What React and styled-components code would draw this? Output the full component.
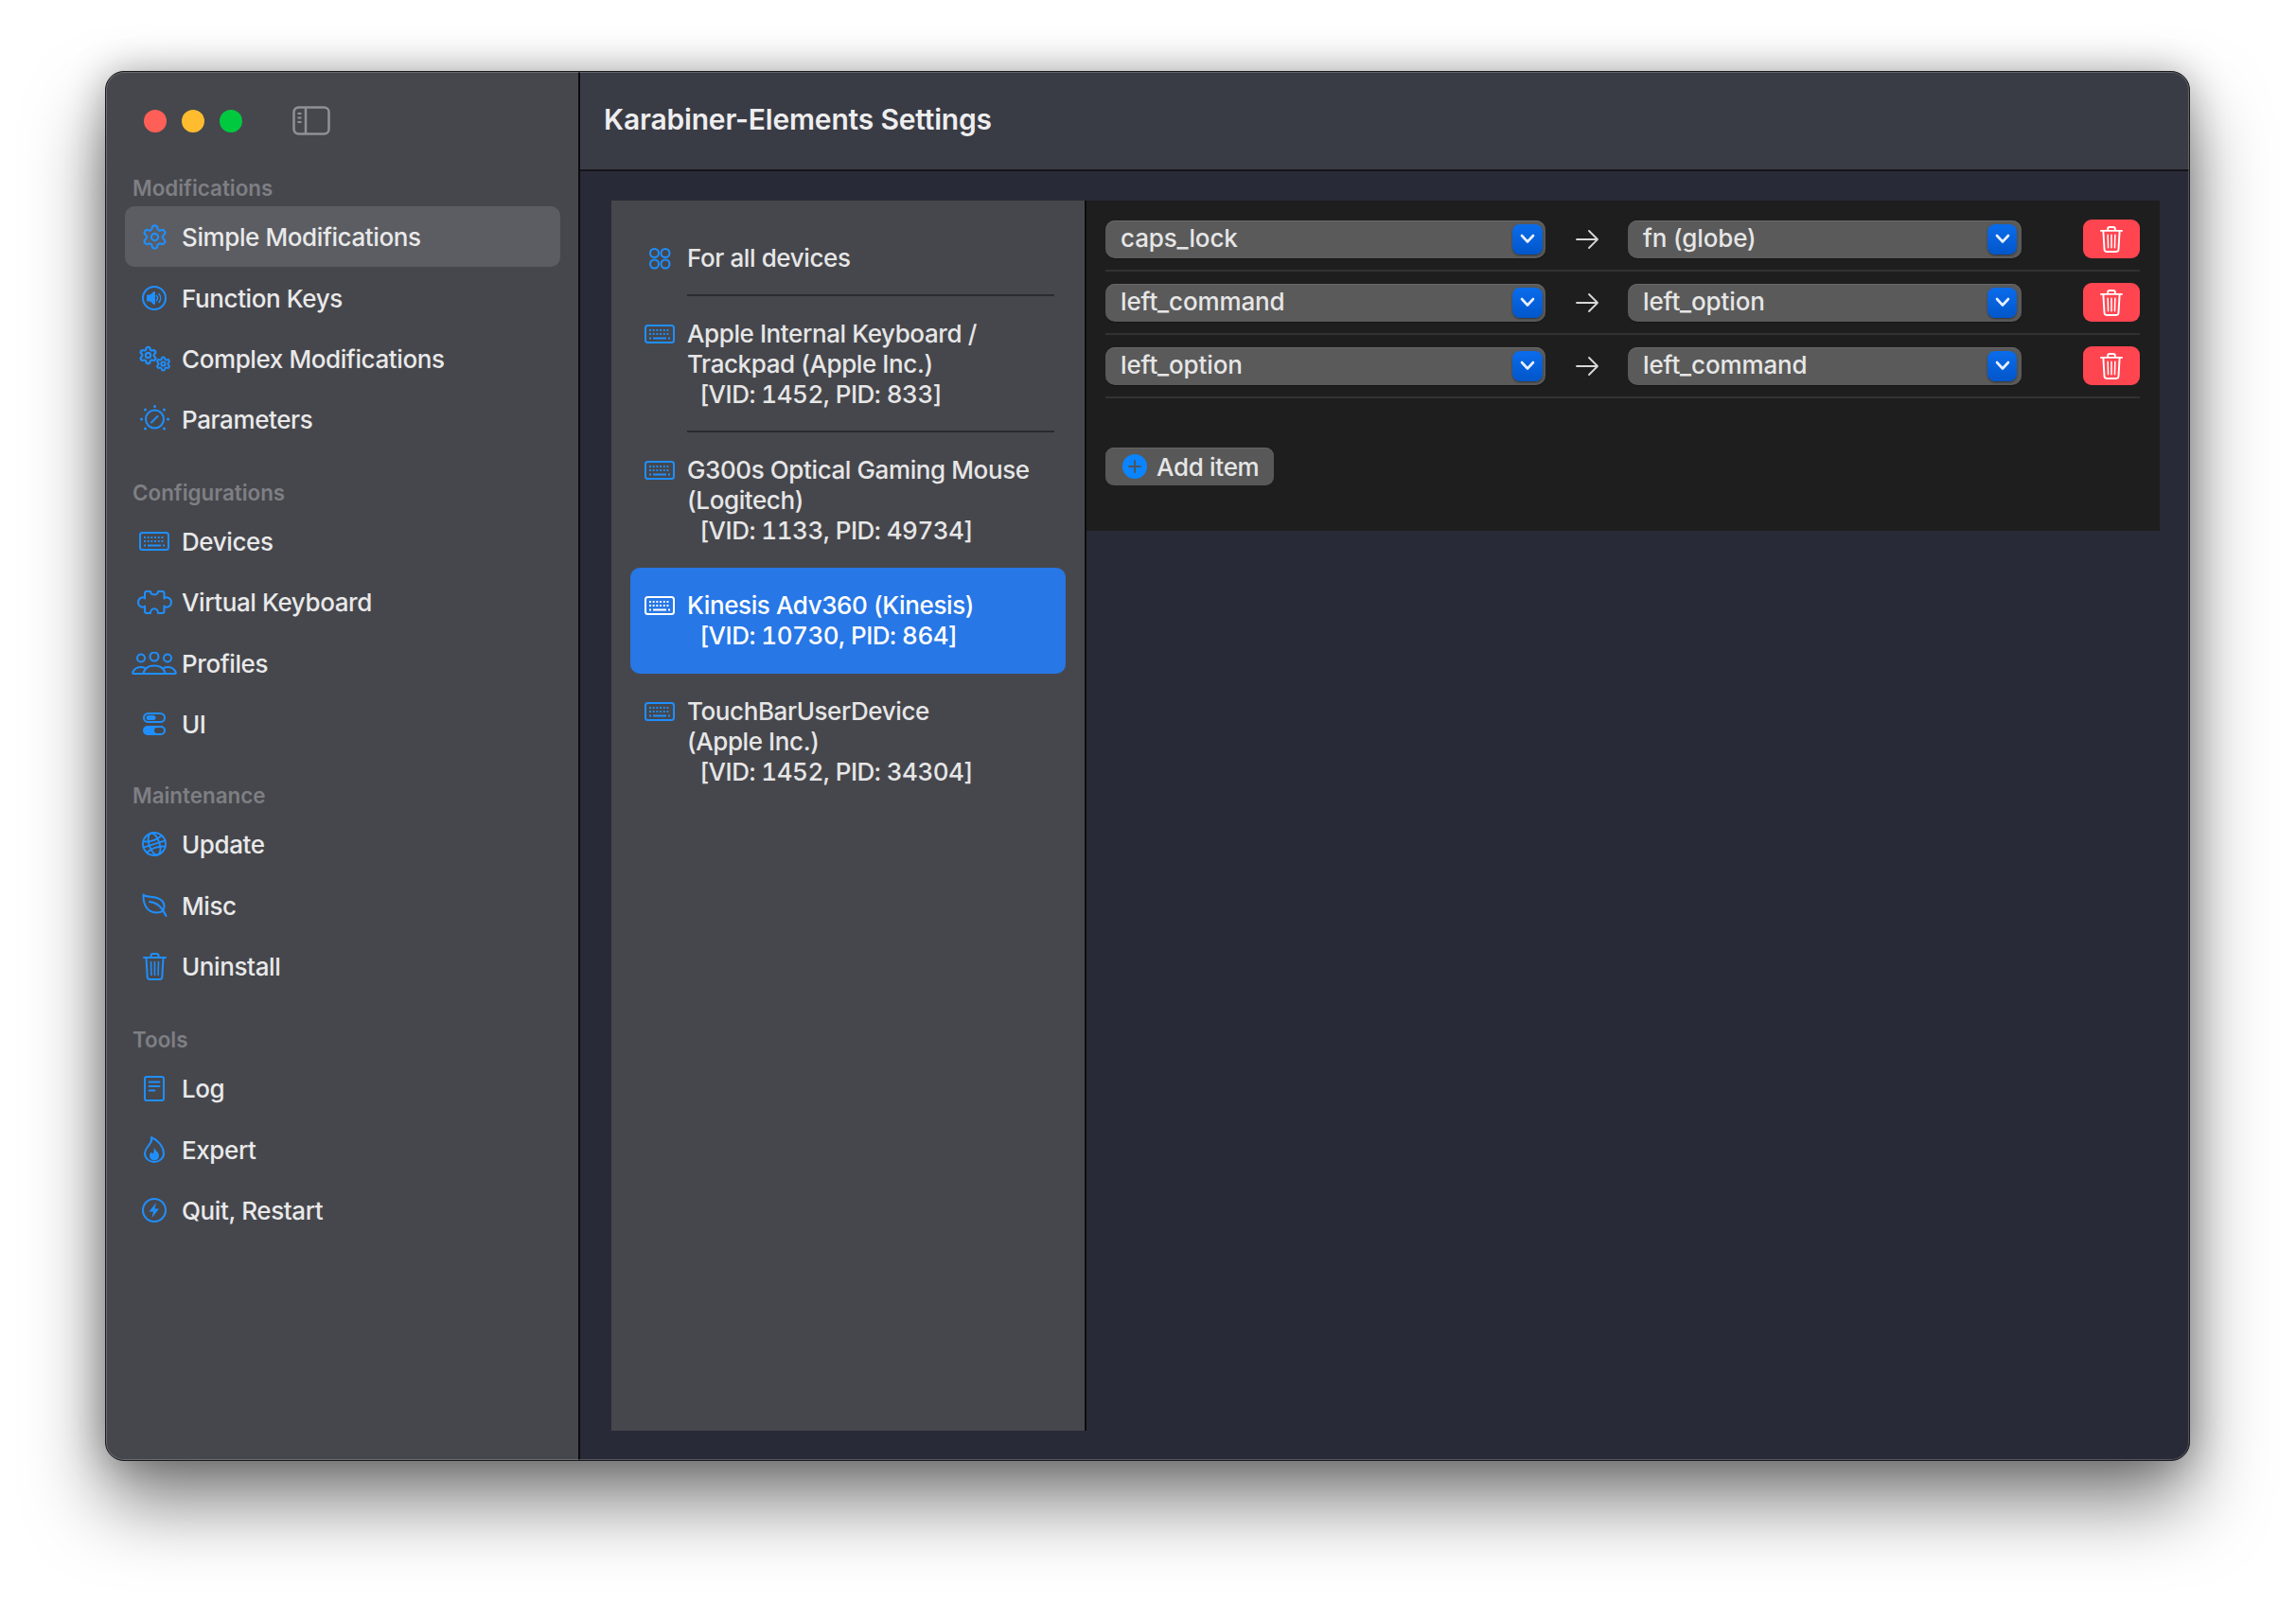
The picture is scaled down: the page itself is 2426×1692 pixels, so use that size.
import styled, { createGlobalStyle } from "styled-components";
import { Settings } from "lucide-react";

const BLUE = "#1f8fff";

const GlobalStyle = createGlobalStyle`
  html, body {
    margin: 0;
    background: #fff;
  }
  body {
    font-family: Inter, "Liberation Sans", sans-serif;
  }
`;

const Stage = styled.div`
  width: 2426px;
  height: 1692px;
  padding: 75px 0 0 111px;
  box-sizing: border-box;
  overflow: hidden;
`;

const Window = styled.div`
  position: relative;
  width: 2203px;
  height: 1469px;
  display: flex;
  box-sizing: border-box;
  border: 1px solid #1a1a1c;
  border-radius: 20px;
  overflow: hidden;
  background: #282a37;
  box-shadow: 0 44px 80px rgba(0, 0, 0, 0.5), 0 0 40px rgba(0, 0, 0, 0.28);

  &::after {
    content: "";
    position: absolute;
    inset: 0;
    border-radius: 19px;
    box-shadow: inset 0 0 0 1px rgba(255, 255, 255, 0.2);
    pointer-events: none;
  }
`;

const Sidebar = styled.aside`
  width: 501px;
  flex: none;
  box-sizing: border-box;
  background: #46474c;
  border-right: 2px solid #0c0c0e;
  padding: 0 19px 0 20px;
`;

const TitleBar = styled.div`
  height: 108px;
  display: flex;
  align-items: center;
  padding: 0 0 4px 20px;
  box-sizing: border-box;
`;

const Light = styled.span`
  width: 24px;
  height: 24px;
  border-radius: 50%;
  margin-right: 16px;
  background: ${({ $color }) => $color};
`;

const ToggleIcon = styled.svg`
  margin-left: 37px;
  margin-top: -2px;
  width: 40px;
  height: 31px;
`;

const Group = styled.section`
  margin-top: ${({ $gap }) => $gap}px;
`;

const GroupLabel = styled.div`
  height: 34px;
  line-height: 30px;
  padding-left: 8px;
  font-size: 22.4px;
  font-weight: 600;
  color: #7e7f84;
`;

const NavItem = styled.div`
  height: 64.4px;
  display: flex;
  align-items: center;
  font-size: 26px;
  font-weight: 450;
  letter-spacing: -0.4px;
  color: #e9e9ea;
  border-radius: 10px;
  background: ${({ $active }) => ($active ? "#5c5d62" : "transparent")};
`;

const IconSlot = styled.span`
  width: 60px;
  height: ${({ $tall }) => ($tall ? "32px" : "auto")};
  flex: none;
  box-sizing: border-box;
  padding-left: 2px;
  display: flex;
  align-items: center;
  justify-content: center;
  color: ${({ $light }) => ($light ? "#fff" : BLUE)};
`;

const NavText = styled.span`
  position: relative;
  top: 0.5px;
`;

const Main = styled.main`
  flex: 1;
  min-width: 0;
  display: flex;
  flex-direction: column;
`;

const Header = styled.header`
  height: 105px;
  flex: none;
  box-sizing: border-box;
  display: flex;
  align-items: center;
  padding: 0 0 3px 25px;
  background: #3a3c45;
  border-bottom: 2px solid #15151a;
  font-size: 30px;
  font-weight: 600;
  letter-spacing: -0.18px;
  color: #eeeeef;
`;

const Content = styled.div`
  flex: 1;
  display: flex;
  align-items: flex-start;
  padding: 31px 31px 31px 33px;
  min-height: 0;
`;

const DevicePanel = styled.div`
  width: 502px;
  height: 100%;
  flex: none;
  box-sizing: border-box;
  background: #46474c;
  border-right: 2px solid #0c0c0e;
  padding: 21px 20px 0;
`;

const DeviceRow = styled.div`
  display: flex;
  padding: 24px 0 22px;
  border-radius: 10px;
  font-size: 26px;
  font-weight: 450;
  line-height: 32px;
  letter-spacing: -0.4px;
  color: ${({ $active }) => ($active ? "#fff" : "#e6e6e7")};
  background: ${({ $active }) => ($active ? "#2777e6" : "transparent")};
  margin-top: ${({ $active }) => ($active ? "1px" : "0")};
  padding-bottom: ${({ $active }) => ($active ? "24px" : "22px")};
`;

const DeviceLine = styled.div`
  white-space: pre;
  font-variant-numeric: ${({ $ids }) => ($ids ? "tabular-nums" : "normal")};
  letter-spacing: ${({ $ids }) => ($ids ? "-0.5px" : "inherit")};
`;

const Separator = styled.div`
  height: 2px;
  margin: 0 12px 0 60px;
  background: #2a2b2f;
`;

const RulesPanel = styled.div`
  flex: 1;
  box-sizing: border-box;
  background: #1e1e1e;
  padding: 8px 21px 48px 20px;
`;

const RuleRow = styled.div`
  height: 67px;
  box-sizing: border-box;
  display: flex;
  align-items: center;
  border-bottom: 2px solid #323232;
`;

const Select = styled.div`
  width: ${({ $width }) => $width}px;
  height: 40px;
  flex: none;
  box-sizing: border-box;
  display: flex;
  align-items: center;
  justify-content: space-between;
  padding: 0 ${({ $inset }) => $inset}px 0 16px;
  border-radius: 10px;
  background: #5a5a5a;
  box-shadow: inset 0 1px 0 #686868, 0 1px 1px rgba(0, 0, 0, 0.3);
  font-size: 26px;
  font-weight: 450;
  letter-spacing: -0.12px;
  color: #e6e6e6;
`;

const SelectText = styled.span`
  position: relative;
  top: -1px;
`;

const DropButton = styled.span`
  width: ${({ $width }) => $width}px;
  height: 32px;
  flex: none;
  display: flex;
  align-items: center;
  justify-content: center;
  border-radius: 8px;
  background: linear-gradient(#0a6cec, #0256c9);
  box-shadow: 0 1px 2px rgba(0, 0, 0, 0.45);
`;

const ArrowCell = styled.span`
  width: 87px;
  flex: none;
  display: flex;
  justify-content: center;
`;

const DeleteButton = styled.button`
  width: 60px;
  height: 41px;
  margin-left: auto;
  padding: 0;
  border: none;
  border-radius: 9px;
  display: flex;
  align-items: center;
  justify-content: center;
  background: #ff4550;
  color: #fff;
`;

const AddButton = styled.button`
  margin-top: 52px;
  width: 178px;
  height: 40px;
  padding: 0 0 0 18px;
  border: none;
  border-radius: 9px;
  display: flex;
  align-items: center;
  gap: 10px;
  background: #585858;
  box-shadow: inset 0 1px 0 #646464;
  font-family: inherit;
  font-size: 26px;
  font-weight: 450;
  letter-spacing: -0.3px;
  color: #e6e6e6;
`;

const Svg = ({ w, h, fill = "none", sw = 2, children }) => (
  <svg
    width={w}
    height={h}
    viewBox={`0 0 ${w} ${h}`}
    fill={fill}
    stroke="currentColor"
    strokeWidth={sw}
    strokeLinecap="round"
    strokeLinejoin="round"
  >
    {children}
  </svg>
);

const VolumeIcon = () => (
  <Svg w={26} h={26}>
    <circle cx="13" cy="13" r="12" />
    <path d="M6 10.5h3l4-3.5v12l-4-3.5H6z" fill="currentColor" />
    <path d="M15.5 10.5a3.5 3.5 0 0 1 0 5M18 8.5a7 7 0 0 1 0 9" strokeWidth="1.5" />
  </Svg>
);

const ComplexIcon = () => (
  <svg width="35" height="28" viewBox="0 0 35 28">
    <Settings x="0" y="0" width="21" height="21" strokeWidth="2.5" />
    <Settings x="18" y="11" width="17" height="17" strokeWidth="2.8" />
  </svg>
);

const DialIcon = () => (
  <Svg w={31} h={30}>
    <circle cx="15.5" cy="15" r="9.5" />
    <path d="M12 18.5l6.5-6.5" />
    <g fill="currentColor" stroke="none">
      <circle cx="15.5" cy="1.5" r="1.5" />
      <circle cx="5.5" cy="5" r="1.5" />
      <circle cx="25.5" cy="5" r="1.5" />
      <circle cx="1.5" cy="15" r="1.5" />
      <circle cx="29.5" cy="15" r="1.5" />
      <circle cx="5.5" cy="25" r="1.5" />
      <circle cx="25.5" cy="25" r="1.5" />
    </g>
  </Svg>
);

const KeyboardIcon = () => (
  <Svg w={32} h={20}>
    <rect x="1" y="1" width="30" height="18" rx="2.5" />
    <g strokeLinecap="butt" strokeWidth="2">
      <path d="M5 6h22M5 10h22" strokeDasharray="1.9 1.8" />
      <path d="M5 14.500h2M9 14.500h14M25 14.500h2" />
    </g>
  </Svg>
);

const PuzzleIcon = () => (
  <Svg w={37} h={25}>
    <path d="M8 8.500V3Q8 1 10 1H14C14 5.500 22 5.500 22 1H26.500Q28.500 1 28.500 3V8.500C31 6 36 8 36 12.500S31 19 28.500 16.500V22Q28.500 24 26.500 24H22C22 17.500 14 17.500 14 24H10Q8 24 8 22V16.500C6 19 1 17 1 12.500S6 6 8 8.500Z" />
  </Svg>
);

const UsersIcon = () => (
  <Svg w={48} h={24}>
    <circle cx="10" cy="6.500" r="4" />
    <circle cx="24" cy="5" r="4.500" />
    <circle cx="38" cy="6.500" r="4" />
    <path d="M14 23H2c-1 0-1-1-.5-2 1.500-3 4-5 8.500-5 1.500 0 3 .3 4 1" />
    <path d="M34 23h12c1 0 1-1 .5-2-1.500-3-4-5-8.500-5-1.500 0-3 .3-4 1" />
    <path d="M14 23c-1.500 0-1.500-1-1-2 1.500-4 5-6.500 11-6.500S33.500 17 35 21c.5 1 .5 2-1 2z" />
  </Svg>
);

const TogglesIcon = () => (
  <Svg w={24} h={24}>
    <rect x="1" y="1" width="22" height="9" rx="4.500" />
    <rect x="3.500" y="3" width="10" height="5" rx="2.500" fill="currentColor" stroke="none" />
    <rect x="0" y="14" width="24" height="10" rx="5" fill="currentColor" stroke="none" />
    <rect x="12" y="16" width="10" height="6" rx="3" fill="#46474c" stroke="none" />
  </Svg>
);

const GlobeIcon = () => (
  <Svg w={26} h={26} sw={1.9}>
    <circle cx="13" cy="13" r="12" />
    <g transform="rotate(-18 13 13)">
      <ellipse cx="13" cy="13" rx="5.500" ry="12" />
      <path d="M3 7c6 2.500 14 2.500 20 0M3 19c6-2.500 14-2.500 20 0M1 13h24" />
    </g>
  </Svg>
);

const LeafIcon = () => (
  <Svg w={27} h={25}>
    <path d="M1.500 1.500C4 4.500 10 3 16 5c4.500 1.500 7.500 5 7.500 9 0 4-3 6.500-8 6.500C8 20.500 1 15 1.500 1.500z" />
    <path d="M8 9c7 .5 13 5 17.500 15" />
  </Svg>
);

const TrashIcon = ({ w = 25, h = 29, sw = 2 }) => (
  <svg width={w} height={h} viewBox="0 0 25 29" fill="none" stroke="currentColor" strokeWidth={sw} strokeLinecap="round" strokeLinejoin="round">
    <path d="M1 5h23M8.500 5V3c0-1.200.8-2 2-2h4c1.200 0 2 .8 2 2v2" />
    <path d="M3.500 5l1.200 20.500c.1 1.500 1 2.500 2.500 2.500h10.600c1.500 0 2.400-1 2.500-2.500L21.500 5" />
    <path d="M8.500 9.500l.4 14M12.500 9.500v14M16.500 9.500l-.4 14" strokeWidth={sw * 0.8} />
  </svg>
);

const LogIcon = () => (
  <Svg w={22} h={27}>
    <rect x="1" y="1" width="20" height="25" rx="2" />
    <path d="M5.500 6.500h11M5.500 11h11M5.500 15.500h6" strokeWidth="1.800" />
  </Svg>
);

const FlameIcon = () => (
  <Svg w={22} h={28}>
    <path d="M8 1c1 4-1 6-4 10-2 2.500-3 4-3 7 0 5 4.500 9 10 9s10-4 10-9c0-7-6-14-13-17z" />
    <path d="M11 12c1 3 5 4.500 5 8.500a5 5 0 0 1-10 0c0-2 1-3 2-4 .5 1 1 1.500 2 1.500.8-2 .5-4 1-6z" fill="currentColor" stroke="none" />
  </Svg>
);

const BoltIcon = () => (
  <Svg w={26} h={26}>
    <circle cx="13" cy="13" r="12" />
    <path d="M15 5L7.500 14.500H12L10.500 21 18 11.500h-4.500z" fill="currentColor" stroke="none" />
  </Svg>
);

const RingsIcon = () => (
  <Svg w={24} h={24}>
    <circle cx="6.500" cy="6.500" r="4.500" />
    <circle cx="18" cy="6.500" r="4.500" />
    <circle cx="6.500" cy="18" r="4.500" />
    <circle cx="18" cy="18" r="4.500" />
  </Svg>
);

const Chevron = () => (
  <svg width="16" height="11" viewBox="0 0 16 11" fill="none" stroke="#e8f0ff" strokeWidth="2.600" strokeLinecap="round" strokeLinejoin="round">
    <path d="M2 2l6 6.500L14 2" />
  </svg>
);

const ArrowIcon = () => (
  <svg width="24" height="20" viewBox="0 0 24 20" fill="none" stroke="#d8d8d8" strokeWidth="1.800" strokeLinecap="round" strokeLinejoin="round">
    <path d="M1 10h22M14 1l9 9-9 9" />
  </svg>
);

const PlusBadge = () => (
  <svg width="26" height="26" viewBox="0 0 26 26">
    <circle cx="13" cy="13" r="13" fill="#0a84ff" />
    <path d="M13 7v12M7 13h12" stroke="#4a5560" strokeWidth="2" strokeLinecap="round" />
  </svg>
);

const groups = [
  {
    label: "Modifications",
    gap: 0,
    items: [
      { text: "Simple Modifications", icon: <Settings size={29} strokeWidth={1.8} />, active: true },
      { text: "Function Keys", icon: <VolumeIcon /> },
      { text: "Complex Modifications", icon: <ComplexIcon /> },
      { text: "Parameters", icon: <DialIcon /> },
    ],
  },
  {
    label: "Configurations",
    gap: 30,
    items: [
      { text: "Devices", icon: <KeyboardIcon /> },
      { text: "Virtual Keyboard", icon: <PuzzleIcon /> },
      { text: "Profiles", icon: <UsersIcon /> },
      { text: "UI", icon: <TogglesIcon /> },
    ],
  },
  {
    label: "Maintenance",
    gap: 29,
    items: [
      { text: "Update", icon: <GlobeIcon /> },
      { text: "Misc", icon: <LeafIcon /> },
      { text: "Uninstall", icon: <TrashIcon /> },
    ],
  },
  {
    label: "Tools",
    gap: 31,
    items: [
      { text: "Log", icon: <LogIcon /> },
      { text: "Expert", icon: <FlameIcon /> },
      { text: "Quit, Restart", icon: <BoltIcon /> },
    ],
  },
];

const devices = [
  { lines: ["For all devices"], icon: <RingsIcon />, sep: true },
  { lines: ["Apple Internal Keyboard /", "Trackpad (Apple Inc.)", "  [VID: 1452, PID: 833]"], icon: <KeyboardIcon />, sep: true },
  { lines: ["G300s Optical Gaming Mouse", "(Logitech)", "  [VID: 1133, PID: 49734]"], icon: <KeyboardIcon /> },
  { lines: ["Kinesis Adv360 (Kinesis)", "  [VID: 10730, PID: 864]"], icon: <KeyboardIcon />, active: true },
  { lines: ["TouchBarUserDevice", "(Apple Inc.)", "  [VID: 1452, PID: 34304]"], icon: <KeyboardIcon /> },
];

const rules = [
  ["caps_lock", "fn (globe)"],
  ["left_command", "left_option"],
  ["left_option", "left_command"],
];

export default function App() {
  return (
    <Stage>
      <GlobalStyle />
      <Window>
        <Sidebar>
          <TitleBar>
            <Light $color="#ff5f57" />
            <Light $color="#febc2e" />
            <Light $color="#00c93f" />
            <ToggleIcon viewBox="0 0 40 31" fill="none" stroke="#909196" strokeWidth="2.500">
              <rect x="1.500" y="1.500" width="37" height="28" rx="5" />
              <path d="M14 1.500v28" />
              <path d="M5.500 8h4M5.500 12.500h4M5.500 17h4" strokeWidth="2" />
            </ToggleIcon>
          </TitleBar>
          {groups.map((group) => (
            <Group key={group.label} $gap={group.gap}>
              <GroupLabel>{group.label}</GroupLabel>
              {group.items.map((item) => (
                <NavItem key={item.text} $active={item.active}>
                  <IconSlot>{item.icon}</IconSlot>
                  <NavText>{item.text}</NavText>
                </NavItem>
              ))}
            </Group>
          ))}
        </Sidebar>
        <Main>
          <Header>Karabiner-Elements Settings</Header>
          <Content>
            <DevicePanel>
              {devices.map((device) => (
                <div key={device.lines[0]}>
                  <DeviceRow $active={device.active}>
                    <IconSlot $tall $light={device.active}>{device.icon}</IconSlot>
                    <div>
                      {device.lines.map((line) => (
                        <DeviceLine key={line} $ids={line.startsWith("  [")}>{line}</DeviceLine>
                      ))}
                    </div>
                  </DeviceRow>
                  {device.sep && <Separator />}
                </div>
              ))}
            </DevicePanel>
            <RulesPanel>
              {rules.map(([from, to]) => (
                <RuleRow key={from}>
                  <Select $width={465} $inset={3}>
                    <SelectText>{from}</SelectText>
                    <DropButton $width={32}><Chevron /></DropButton>
                  </Select>
                  <ArrowCell><ArrowIcon /></ArrowCell>
                  <Select $width={416} $inset={5}>
                    <SelectText>{to}</SelectText>
                    <DropButton $width={31}><Chevron /></DropButton>
                  </Select>
                  <DeleteButton>
                    <TrashIcon w={24} h={28} />
                  </DeleteButton>
                </RuleRow>
              ))}
              <AddButton>
                <PlusBadge />
                Add item
              </AddButton>
            </RulesPanel>
          </Content>
        </Main>
      </Window>
    </Stage>
  );
}
